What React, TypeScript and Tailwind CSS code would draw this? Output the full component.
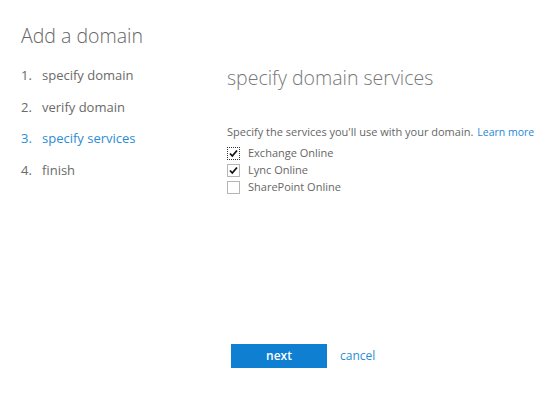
import React from "react";

const font = { fontFamily: '"Open Sans", "Noto Sans", sans-serif' };

function Check({ checked, focus }: { checked: boolean; focus?: boolean }) {
  return (
    <span
      className={`relative inline-flex h-[13px] w-[13px] items-center justify-center border bg-white ${
        focus ? "border-dotted border-[#333]" : "border-[#b5b5b5]"
      }`}
    >
      {checked && (
        <svg width="9" height="9" viewBox="0 0 9 9">
          <path d="M1 4.5 L3.3 7 L8 1.5" fill="none" stroke="#111" strokeWidth="1.8" />
        </svg>
      )}
    </span>
  );
}

export default function App() {
  const steps = ["specify domain", "verify domain", "specify services", "finish"];
  return (
    <div className="relative h-[397px] w-[560px] bg-white text-[#666]" style={font}>
      <div className="flex">
        <div className="w-[205px] pl-[21px] pt-[21px]">
          <div className="text-[19.5px] font-light leading-[30px] text-[#666]">Add a domain</div>
          <div className="mt-[9px] flex flex-col">
            {steps.map((s, i) => (
              <div
                key={s}
                className={`flex h-[31.7px] items-center text-[13px] ${i === 2 ? "text-[#2a8dd4]" : "text-[#6a6a6a]"}`}
              >
                <span className="w-[21px]">{i + 1}.</span>
                <span>{s}</span>
              </div>
            ))}
          </div>
        </div>
        <div className="pl-[22px] pt-[63px]">
          <div className="text-[19.5px] font-light leading-[30px] text-[#777]">specify domain services</div>
          <div className="mt-[31px] text-[11px] text-[#666]">
            Specify the services you'll use with your domain.
            <span className="ml-[4px] text-[10.5px] text-[#1e88d8]">Learn more</span>
          </div>
          <div className="mt-[6px] flex flex-col gap-[4px] text-[11px] text-[#666]">
            <label className="flex h-[13px] items-center gap-[8px]">
              <Check checked focus />
              <span>Exchange Online</span>
            </label>
            <label className="flex h-[13px] items-center gap-[8px]">
              <Check checked />
              <span>Lync Online</span>
            </label>
            <label className="flex h-[13px] items-center gap-[8px]">
              <Check checked={false} />
              <span>SharePoint Online</span>
            </label>
          </div>
        </div>
      </div>
      <div className="absolute left-[231px] top-[344px] flex items-center">
        <button className="h-[24px] w-[96px] bg-[#0f7fd2] text-[12px] font-semibold text-white">next</button>
        <span className="ml-[13px] text-[12px] text-[#2a8dd4]">cancel</span>
      </div>
    </div>
  );
}
